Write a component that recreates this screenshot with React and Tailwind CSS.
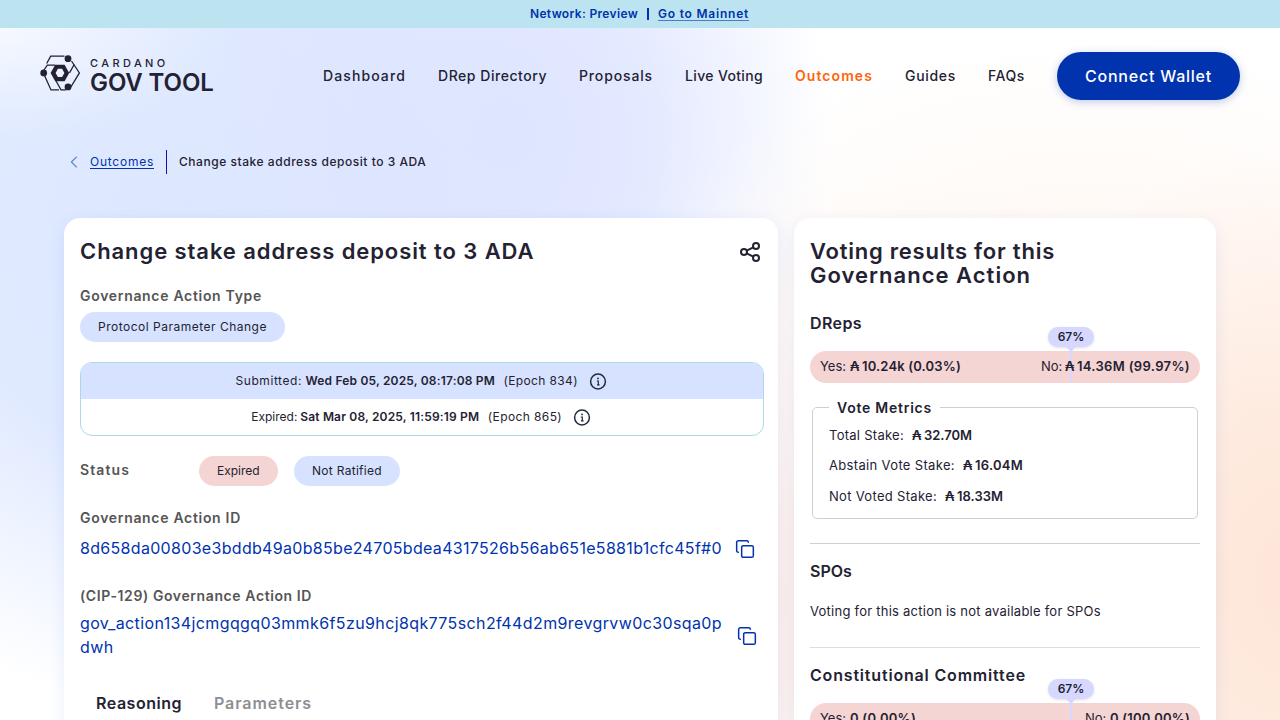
import { Copy } from "lucide-react";

function Logo() {
  return (
    <div className="flex h-10 items-start">
      <svg width="42" height="38" viewBox="39 54.5 42 38" fill="none" stroke="#242232" strokeWidth="1.3" className="-ml-px mt-[2px] shrink-0">
        <path d="M46.7 64 50.7 56.6H64.5" />
        <path d="M44 70.5 47.3 65.6H55" />
        <path d="M71.5 61.5 79.4 73.4 69 90.5" />
        <path d="M74.2 65 69.5 73.4" />
        <path d="M44.5 76 51 90.4H59" />
        <path d="M55.8 81 61 90.4H66" />
        <g fill="#242232" stroke="none">
          <circle cx="68" cy="59.2" r="3.4" />
          <circle cx="68" cy="87.4" r="3.4" />
          <circle cx="43.7" cy="73.4" r="3.4" />
          <path fillRule="evenodd" d="M50.6 73.4 55.2 65.2H64.6L69.2 73.4 64.6 81.8H55.2ZM55.6 73.4 57.9 77.6H62.1L64.4 73.4 62.1 69.3H57.9Z" />
        </g>
      </svg>
      <div className="ml-[9px] flex flex-col whitespace-nowrap">
        <span className="mt-[5px] h-3 text-[11px] font-medium leading-[12px] tracking-[3.4px]">CARDANO</span>
        <span className="mt-[1px] text-[24px] font-semibold leading-[26px] tracking-[-0.1px]">GOV TOOL</span>
      </div>
    </div>
  );
}

function InfoIcon() {
  return (
    <svg width="18" height="18" viewBox="0 0 18 18" fill="none" stroke="#212a3d" strokeWidth="1.5" className="-mt-px ml-[10.5px] shrink-0">
      <circle cx="9" cy="9.5" r="7.4" />
      <path d="M7.8 9h1.5v3.6M8 12.8h2.6" strokeWidth="1.2" />
      <circle cx="9" cy="6.4" r="0.9" fill="#212a3d" stroke="none" />
    </svg>
  );
}

function ShareIcon() {
  return (
    <svg width="22" height="22" viewBox="0 0 22 22" fill="none" stroke="#242232" strokeWidth="2">
      <circle cx="5" cy="11" r="3" />
      <circle cx="17" cy="5" r="3" />
      <circle cx="17" cy="17" r="3" />
      <path d="M7.7 9.6 14.3 6.4M7.7 12.4l6.6 3.2" />
    </svg>
  );
}

const nav = [
  ["Dashboard", "w-[83px] tracking-[1.1px]"],
  ["DRep Directory", "w-[109px] tracking-[0.54px]"],
  ["Proposals", "w-[74px] tracking-[0.86px]"],
  ["Live Voting", "w-[78px] tracking-[0.35px]"],
  ["Outcomes", "w-[78px] tracking-[1.07px] font-semibold text-[#ff640a]"],
  ["Guides", "w-[51px] tracking-[0.69px]"],
  ["FAQs", "w-[37px] tracking-[0.57px]"],
];

function VoteBar({ yes, no }) {
  return (
    <div className="relative flex h-8 shrink-0 items-center justify-between rounded-full bg-[#f5d5d3] px-[10px] text-[13px]">
      <div className="absolute left-[260px] top-0 h-8 w-[2px] bg-[#d6d8ff]" />
      <div className="absolute left-[238px] top-[-24px] flex h-5 w-[46px] items-center justify-center rounded-full bg-[#d6d8ff] text-[12px] font-semibold shadow-[0_1px_3px_rgba(0,0,0,0.12)]">
        67%
        <svg width="10" height="5" viewBox="0 0 10 5" className="absolute left-[18px] top-[19.5px]">
          <path d="M0 0h10L5 5z" fill="#d6d8ff" />
        </svg>
      </div>
      {yes}
      {no}
    </div>
  );
}

function Ada() {
  return <span className="inline-block w-3 font-semibold">₳</span>;
}

function Metric({ label, labelClass, value, valueClass }) {
  return (
    <div className="flex h-[30.5px] items-center text-[13px]">
      <span className={labelClass}>{label}</span>
      <span className="ml-2 flex font-semibold">
        <Ada />
        <span className={valueClass}>{value}</span>
      </span>
    </div>
  );
}

export default function App() {
  return (
    <div className="flex h-[720px] w-[1280px] flex-col overflow-hidden whitespace-nowrap bg-white bg-[radial-gradient(ellipse_220px_120px_at_0px_20px,#ffffffb0_0%,#ffffff00_100%),radial-gradient(ellipse_330px_440px_at_1300px_580px,#fee6d8_0%,#fee8dbe6_35%,#fee8db00_100%),radial-gradient(ellipse_480px_420px_at_900px_600px,#fbe6e0cc_0%,#fbe6e000_100%),radial-gradient(ellipse_420px_220px_at_1080px_260px,#fff8f3_0%,#fff8f300_100%),radial-gradient(ellipse_320px_380px_at_510px_130px,#dee5ff_0%,#dee5ffd0_45%,#dee5ff00_100%),radial-gradient(ellipse_480px_480px_at_190px_230px,#dce7ff_0%,#dce7ffe0_50%,#dce7ff00_100%)] font-['Inter',sans-serif] text-[#242232]">
      <div className="flex h-7 shrink-0 items-center bg-[#bce4f0] pl-[530px] text-[12px] font-semibold text-[#0033ad]">
        <span className="w-[108px] tracking-[0.33px]">Network: Preview</span>
        <span className="ml-[9px] mr-[9.5px] h-3 w-[1.5px] bg-[#0033ad]" />
        <span className="border-b border-[#0033ad]/60 leading-[13px] tracking-[0.78px]">Go to Mainnet</span>
      </div>

      <header className="flex h-24 shrink-0 items-center justify-between px-10">
        <div className="self-start pt-6">
          <Logo />
        </div>
        <nav className="flex items-center gap-8 text-[14px] font-medium">
          {nav.map(([label, cls]) => (
            <a key={label} className="-mt-0.5 flex">
              <span className={cls}>{label}</span>
            </a>
          ))}
          <button className="h-12 w-[183px] rounded-full bg-[#0033ad] pb-px text-[16px] font-medium tracking-[0.77px] text-white shadow-[0_2px_8px_rgba(0,51,173,0.25)]">Connect Wallet</button>
        </nav>
      </header>

      <div className="mt-[26px] flex h-6 shrink-0 items-center pl-[70px] text-[12px]">
        <svg width="8" height="12" viewBox="0 0 8 12" fill="none" stroke="#5d80d0" strokeWidth="1.2">
          <path d="M6.8 0.6 1.4 6l5.4 5.4" />
        </svg>
        <span className="ml-3 w-16 tracking-[0.75px] text-[#0033ad] underline underline-offset-2">Outcomes</span>
        <span className="ml-3 h-6 w-px bg-[#1212a0]" />
        <span className="ml-3 font-medium tracking-[0.54px]">Change stake address deposit to 3 ADA</span>
      </div>

      <main className="mt-11 flex min-h-0 flex-1 gap-4 pl-16">
        <section className="flex h-[620px] w-[714px] flex-col rounded-t-[16px] bg-white px-4 pt-[21px] shadow-[0_4px_15px_rgba(47,98,220,0.1)]">
          <div className="flex h-6 items-center justify-between pr-px">
            <h1 className="text-[22px] font-semibold leading-6 tracking-[0.92px]">Change stake address deposit to 3 ADA</h1>
            <div className="pt-0.5"><ShareIcon /></div>
          </div>
          <div className="mt-[23px] text-[14px] font-semibold leading-5 tracking-[0.69px] text-[#555555]">Governance Action Type</div>
          <div className="mt-1.5 flex h-[30px] w-[205px] items-center rounded-full bg-[#d6e2ff] pl-[18px] text-[12px] tracking-[0.5px]">Protocol Parameter Change</div>

          <div className="mt-5 flex h-[74px] w-[684px] shrink-0 flex-col overflow-hidden rounded-xl border border-[#add8e6] text-[12px]">
            <div className="flex h-9 items-center justify-center bg-[#d6e2ff] pr-[2px]">
              <span className="w-[70px] tracking-[0.57px]">Submitted:</span>
              <span className="w-[190px] font-semibold tracking-[0.18px]">Wed Feb 05, 2025, 08:17:08 PM</span>
              <span className="ml-2 w-[74.5px] tracking-[0.37px]">(Epoch 834)</span>
              <InfoIcon />
            </div>
            <div className="flex h-9 items-center justify-center pr-[2px]">
              <span className="w-[49px]">Expired:</span>
              <span className="w-[179.5px] font-semibold tracking-[0.17px]">Sat Mar 08, 2025, 11:59:19 PM</span>
              <span className="ml-2 w-[74.5px] tracking-[0.4px]">(Epoch 865)</span>
              <InfoIcon />
            </div>
          </div>

          <div className="mt-5 flex h-[30px] items-center">
            <span className="w-[119px] pb-0.5 text-[14px] font-semibold leading-5 tracking-[1.1px] text-[#555555]">Status</span>
            <span className="flex h-[30px] w-[79px] items-center rounded-full bg-[#f5d5d3] pl-[18px] text-[12px]">Expired</span>
            <span className="ml-4 flex h-[30px] w-[106px] items-center rounded-full bg-[#d6e2ff] pl-[18px] text-[12px] tracking-[0.29px]">Not Ratified</span>
          </div>

          <div className="mt-[22px] text-[14px] font-semibold leading-5 tracking-[0.69px] text-[#555555]">Governance Action ID</div>
          <div className="mt-2 flex h-6 items-center text-[#0033ad]">
            <span className="w-[655px] text-[16px] tracking-[0.312px]">8d658da00803e3bddb49a0b85be24705bdea4317526b56ab651e5881b1cfc45f#0</span>
            <Copy size={20} strokeWidth={1.8} className="mt-0.5" />
          </div>
          <div className="mt-[26px] text-[14px] font-semibold leading-5 tracking-[0.6px] text-[#555555]">(CIP-129) Governance Action ID</div>
          <div className="mt-[5px] flex h-12 items-center text-[#0033ad]">
            <span className="w-[657px] text-[16px] leading-6 tracking-[0.386px]">
              gov_action134jcmgqgq03mmk6f5zu9hcj8qk775sch2f44d2m9revgrvw0c30sqa0p
              <br />
              dwh
            </span>
            <Copy size={20} strokeWidth={1.8} className="mt-0.5" />
          </div>
          <div className="mt-8 flex h-6 items-center pl-4 text-[16px] font-semibold">
            <span className="w-[118px] tracking-[0.52px]">Reasoning</span>
            <span className="tracking-[0.93px] text-[#8e8e95]">Parameters</span>
          </div>
        </section>

        <section className="flex h-[620px] w-[422px] flex-col rounded-t-[16px] bg-white px-4 pt-[21px] shadow-[0_4px_15px_rgba(47,98,220,0.1)]">
          <h2 className="text-[22px] font-semibold leading-6">
            <span className="tracking-[0.77px]">Voting results for this</span>
            <br />
            <span className="tracking-[1.02px]">Governance Action</span>
          </h2>
          <h3 className="mb-[18px] mt-[26px] text-[16px] font-semibold leading-5 tracking-[0.4px]">DReps</h3>
          <VoteBar
            yes={
              <div className="relative flex">
                <span className="w-[30px]">Yes:</span>
                <Ada />
                <span className="font-semibold tracking-[0.16px]">10.24k (0.03%)</span>
              </div>
            }
            no={
              <div className="relative flex">
                <span className="w-6">No:</span>
                <Ada />
                <span className="font-semibold tracking-[0.34px]">14.36M (99.97%)</span>
              </div>
            }
          />
          <fieldset className="mx-0.5 mt-[15px] h-[121px] shrink-0 rounded-[5px] border border-[#cfcfd2] pl-4">
            <legend className="w-[111px] px-2 pt-px text-[14px] font-semibold leading-[18px] tracking-[0.76px]">Vote Metrics</legend>
            <div className="mt-[3px] flex flex-col">
              <Metric label="Total Stake:" labelClass="tracking-[0.27px]" value="32.70M" valueClass="" />
              <Metric label="Abstain Vote Stake:" labelClass="tracking-[0.34px]" value="16.04M" valueClass="tracking-[0.26px]" />
              <Metric label="Not Voted Stake:" labelClass="tracking-[0.31px]" value="18.33M" valueClass="" />
            </div>
          </fieldset>
          <div className="mt-6 border-t border-[#d0d0d2]" />
          <h3 className="mt-[17px] text-[16px] font-semibold leading-5">SPOs</h3>
          <p className="mt-5 text-[13px] leading-5 tracking-[0.24px]">Voting for this action is not available for SPOs</p>
          <div className="mt-[26px] border-t border-[#dedee0]" />
          <h3 className="mb-[18px] mt-[17px] text-[16px] font-semibold leading-5 tracking-[0.82px]">Constitutional Committee</h3>
          <VoteBar
            yes={
              <div className="relative flex">
                <span className="w-[30px]">Yes:</span>
                <span className="font-semibold tracking-[0.25px]">0 (0.00%)</span>
              </div>
            }
            no={
              <div className="relative flex">
                <span className="w-[25px]">No:</span>
                <span className="font-semibold tracking-[0.2px]">0 (100.00%)</span>
              </div>
            }
          />
        </section>
      </main>
    </div>
  );
}
